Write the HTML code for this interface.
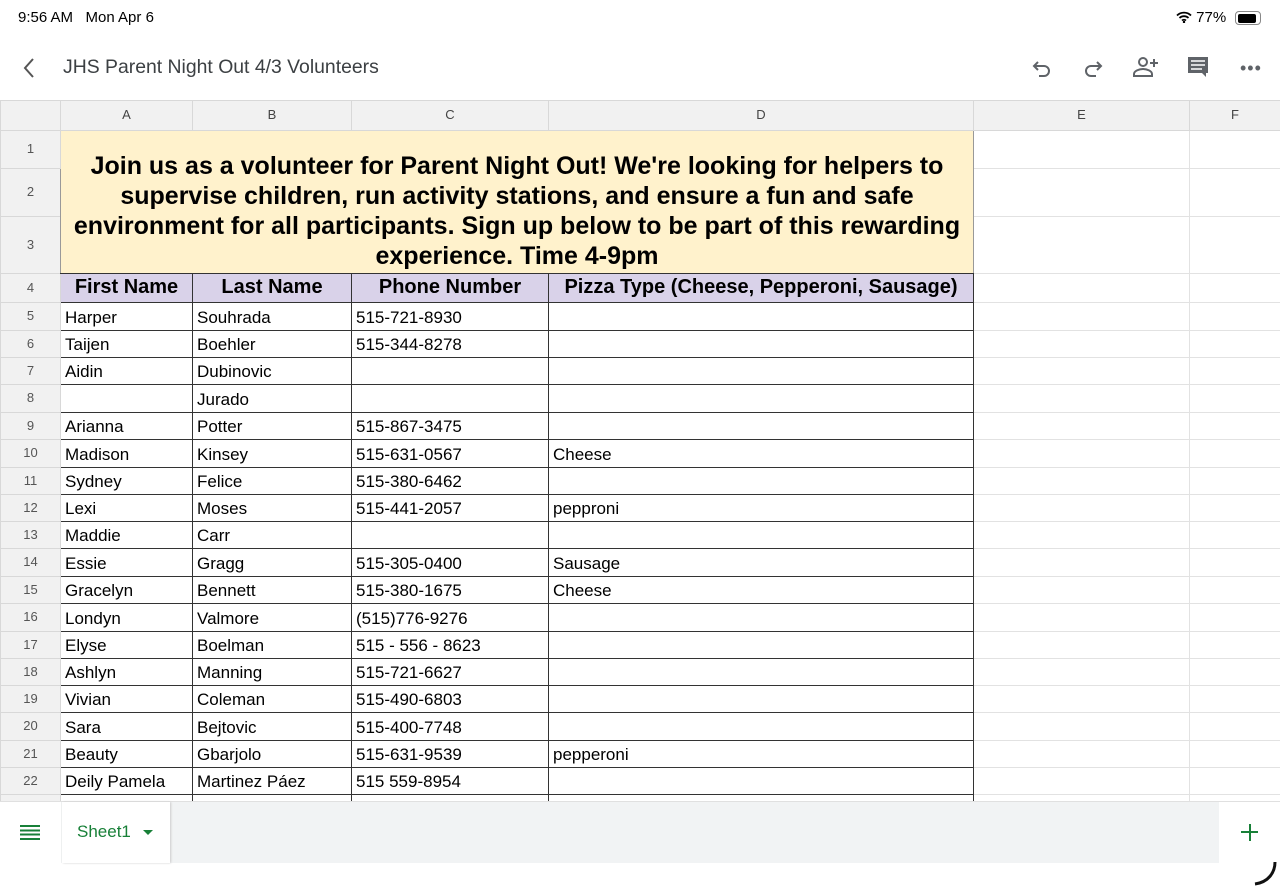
<!DOCTYPE html>
<html><head><meta charset="utf-8"><style>
body{margin:0;width:1280px;height:889px;overflow:hidden;background:#fff;font-family:"Liberation Sans",Arial,sans-serif;position:relative}
.st{position:absolute;top:9px;font-size:15px;color:#000}
.title{position:absolute;left:63px;top:56px;font-size:19.4px;color:#3c4043}
table{position:absolute;left:0;top:100px;border-collapse:collapse;table-layout:fixed;width:1280px}
td{border:1px solid #e2e2e2;padding:0 4px;font-size:17px;color:#000;vertical-align:bottom;white-space:nowrap;overflow:hidden;padding-bottom:2px;box-sizing:border-box}
tr.h td{background:#f1f1f1;color:#444;font-size:13px;text-align:center;vertical-align:middle;border-color:#d8d8d8}
td.rh{background:#f1f1f1;color:#555;font-size:13px;text-align:center;vertical-align:middle;border-color:#d8d8d8}
td.b{border:1.5px solid #333}
tr.hd td.b{background:#d9d2e9;font-weight:bold;font-size:20px;text-align:center;vertical-align:middle}
td.ban{background:#fff2cc;font-weight:bold;font-size:25px;line-height:30px;text-align:center;vertical-align:bottom;white-space:normal;border:1px solid #999;border-bottom:1.5px solid #333;padding:0 2px 2px}
.bar{position:absolute;left:0;top:801px;width:1280px;height:61px;background:#f1f3f4;border-top:1px solid #e0e0e0}
</style></head><body>
<div class="st" style="left:18px">9:56 AM&nbsp;&nbsp; Mon Apr 6</div>
<div class="st" style="left:1176px;font-size:15px">
<svg width="16" height="12" viewBox="0 0 16 12" style="vertical-align:-1px"><path d="M1 4.5a10 10 0 0 1 14 0M3.5 7a6.5 6.5 0 0 1 9 0M6 9.5a3 3 0 0 1 4 0" stroke="#000" stroke-width="1.8" fill="none"/><circle cx="8" cy="11" r="1.2"/></svg> 77%</div>
<div style="position:absolute;left:1235px;top:11px;width:24px;height:12px;border:1px solid #888;border-radius:4px"><div style="margin:1.5px;width:18px;height:9px;background:#000;border-radius:2px"></div></div>
<svg style="position:absolute;left:22px;top:57px" width="14" height="22"><path d="M11 2L3 11l8 9" stroke="#555" stroke-width="2" fill="none"/></svg>
<div class="title">JHS Parent Night Out 4/3 Volunteers</div>
<svg style="position:absolute;left:1030px;top:56px" width="24" height="24" viewBox="0 0 24 24"><path d="M8 6L4 10l4 4M4 10h10a5 5 0 0 1 0 10H9" stroke="#5f6368" stroke-width="2" fill="none"/></svg>
<svg style="position:absolute;left:1081px;top:56px" width="24" height="24" viewBox="0 0 24 24"><path d="M16 6l4 4-4 4M20 10H10a5 5 0 0 0 0 10h5" stroke="#5f6368" stroke-width="2" fill="none"/></svg>
<svg style="position:absolute;left:1132px;top:55px" width="28" height="24" viewBox="0 0 28 24"><circle cx="11" cy="7" r="4" stroke="#5f6368" stroke-width="2" fill="none"/><path d="M2 21v-2c0-3 5-5 9-5s9 2 9 5v2z" stroke="#5f6368" stroke-width="2" fill="none"/><path d="M22 4v8M18 8h8" stroke="#5f6368" stroke-width="2"/></svg>
<svg style="position:absolute;left:1186px;top:55px" width="24" height="24" viewBox="0 0 24 24"><path d="M2 2h20v16h-2v4l-4-4H2z" fill="#5f6368"/><path d="M5 6h14M5 10h14M5 14h11" stroke="#fff" stroke-width="1.6"/></svg>
<div style="position:absolute;left:1240px;top:58px;font-size:18px;color:#5f6368;letter-spacing:1px">•••</div>
<table>
<colgroup><col style="width:60px"><col style="width:132px"><col style="width:159px"><col style="width:197px"><col style="width:425px"><col style="width:216px"><col style="width:91px"></colgroup>
<tr class="h" style="height:30px"><td></td><td>A</td><td>B</td><td>C</td><td>D</td><td>E</td><td>F</td></tr>
<tr style="height:38px"><td class="rh">1</td><td colspan="4" rowspan="3" class="ban">Join us as a volunteer for Parent Night Out! We're looking for helpers to supervise children, run activity stations, and ensure a fun and safe environment for all participants. Sign up below to be part of this rewarding experience. Time 4-9pm</td><td></td><td></td></tr>
<tr style="height:48px"><td class="rh">2</td><td></td><td></td></tr>
<tr style="height:57px"><td class="rh">3</td><td></td><td></td></tr>
<tr class="hd" style="height:29px"><td class="rh">4</td><td class="b">First Name</td><td class="b">Last Name</td><td class="b">Phone Number</td><td class="b">Pizza Type (Cheese, Pepperoni, Sausage)</td><td></td><td></td></tr>
<tr style="height:28px"><td class="rh">5</td><td class="b">Harper</td><td class="b">Souhrada</td><td class="b">515-721-8930</td><td class="b"></td><td></td><td></td></tr>
<tr style="height:27px"><td class="rh">6</td><td class="b">Taijen</td><td class="b">Boehler</td><td class="b">515-344-8278</td><td class="b"></td><td></td><td></td></tr>
<tr style="height:27px"><td class="rh">7</td><td class="b">Aidin</td><td class="b">Dubinovic</td><td class="b"></td><td class="b"></td><td></td><td></td></tr>
<tr style="height:28px"><td class="rh">8</td><td class="b"></td><td class="b">Jurado</td><td class="b"></td><td class="b"></td><td></td><td></td></tr>
<tr style="height:27px"><td class="rh">9</td><td class="b">Arianna</td><td class="b">Potter</td><td class="b">515-867-3475</td><td class="b"></td><td></td><td></td></tr>
<tr style="height:28px"><td class="rh">10</td><td class="b">Madison</td><td class="b">Kinsey</td><td class="b">515-631-0567</td><td class="b">Cheese</td><td></td><td></td></tr>
<tr style="height:27px"><td class="rh">11</td><td class="b">Sydney</td><td class="b">Felice</td><td class="b">515-380-6462</td><td class="b"></td><td></td><td></td></tr>
<tr style="height:27px"><td class="rh">12</td><td class="b">Lexi</td><td class="b">Moses</td><td class="b">515-441-2057</td><td class="b">pepproni</td><td></td><td></td></tr>
<tr style="height:27px"><td class="rh">13</td><td class="b">Maddie</td><td class="b">Carr</td><td class="b"></td><td class="b"></td><td></td><td></td></tr>
<tr style="height:28px"><td class="rh">14</td><td class="b">Essie</td><td class="b">Gragg</td><td class="b">515-305-0400</td><td class="b">Sausage</td><td></td><td></td></tr>
<tr style="height:27px"><td class="rh">15</td><td class="b">Gracelyn</td><td class="b">Bennett</td><td class="b">515-380-1675</td><td class="b">Cheese</td><td></td><td></td></tr>
<tr style="height:28px"><td class="rh">16</td><td class="b">Londyn</td><td class="b">Valmore</td><td class="b">(515)776-9276</td><td class="b"></td><td></td><td></td></tr>
<tr style="height:27px"><td class="rh">17</td><td class="b">Elyse</td><td class="b">Boelman</td><td class="b">515 - 556 - 8623</td><td class="b"></td><td></td><td></td></tr>
<tr style="height:27px"><td class="rh">18</td><td class="b">Ashlyn</td><td class="b">Manning</td><td class="b">515-721-6627</td><td class="b"></td><td></td><td></td></tr>
<tr style="height:27px"><td class="rh">19</td><td class="b">Vivian</td><td class="b">Coleman</td><td class="b">515-490-6803</td><td class="b"></td><td></td><td></td></tr>
<tr style="height:28px"><td class="rh">20</td><td class="b">Sara</td><td class="b">Bejtovic</td><td class="b">515-400-7748</td><td class="b"></td><td></td><td></td></tr>
<tr style="height:27px"><td class="rh">21</td><td class="b">Beauty</td><td class="b">Gbarjolo</td><td class="b">515-631-9539</td><td class="b">pepperoni</td><td></td><td></td></tr>
<tr style="height:27px"><td class="rh">22</td><td class="b">Deily Pamela</td><td class="b">Martinez Páez</td><td class="b">515 559-8954</td><td class="b"></td><td></td><td></td></tr>
<tr style="height:27px"><td class="rh">23</td><td class="b"></td><td class="b"></td><td class="b"></td><td class="b"></td><td></td><td></td></tr>
</table>
<div class="bar">
<div style="position:absolute;left:0;top:0;width:61px;height:61px;background:#fff"></div>
<div style="position:absolute;left:20px;top:23px;width:20px;height:15px;background:repeating-linear-gradient(#188038 0 2px,transparent 2px 4.3px)"></div>
<div style="position:absolute;left:62px;top:0;width:108px;height:61px;background:#fff;box-shadow:1px 0 2px #ccc"></div>
<div style="position:absolute;left:77px;top:20px;font-size:17px;color:#188038">Sheet1</div>
<div style="position:absolute;left:143px;top:28px;width:0;height:0;border-left:5px solid transparent;border-right:5px solid transparent;border-top:5px solid #188038"></div>
<div style="position:absolute;left:1219px;top:0;width:61px;height:61px;background:#fff"></div>
<div style="position:absolute;left:1241px;top:29px;width:17px;height:2px;background:#188038"></div>
<div style="position:absolute;left:1248.5px;top:21.5px;width:2px;height:17px;background:#188038"></div>
</div>
<svg style="position:absolute;left:1250px;top:860px" width="30" height="29"><path d="M25 2c0 10-6 20-20 22" stroke="#111" stroke-width="3" fill="none"/></svg>
</body></html>
